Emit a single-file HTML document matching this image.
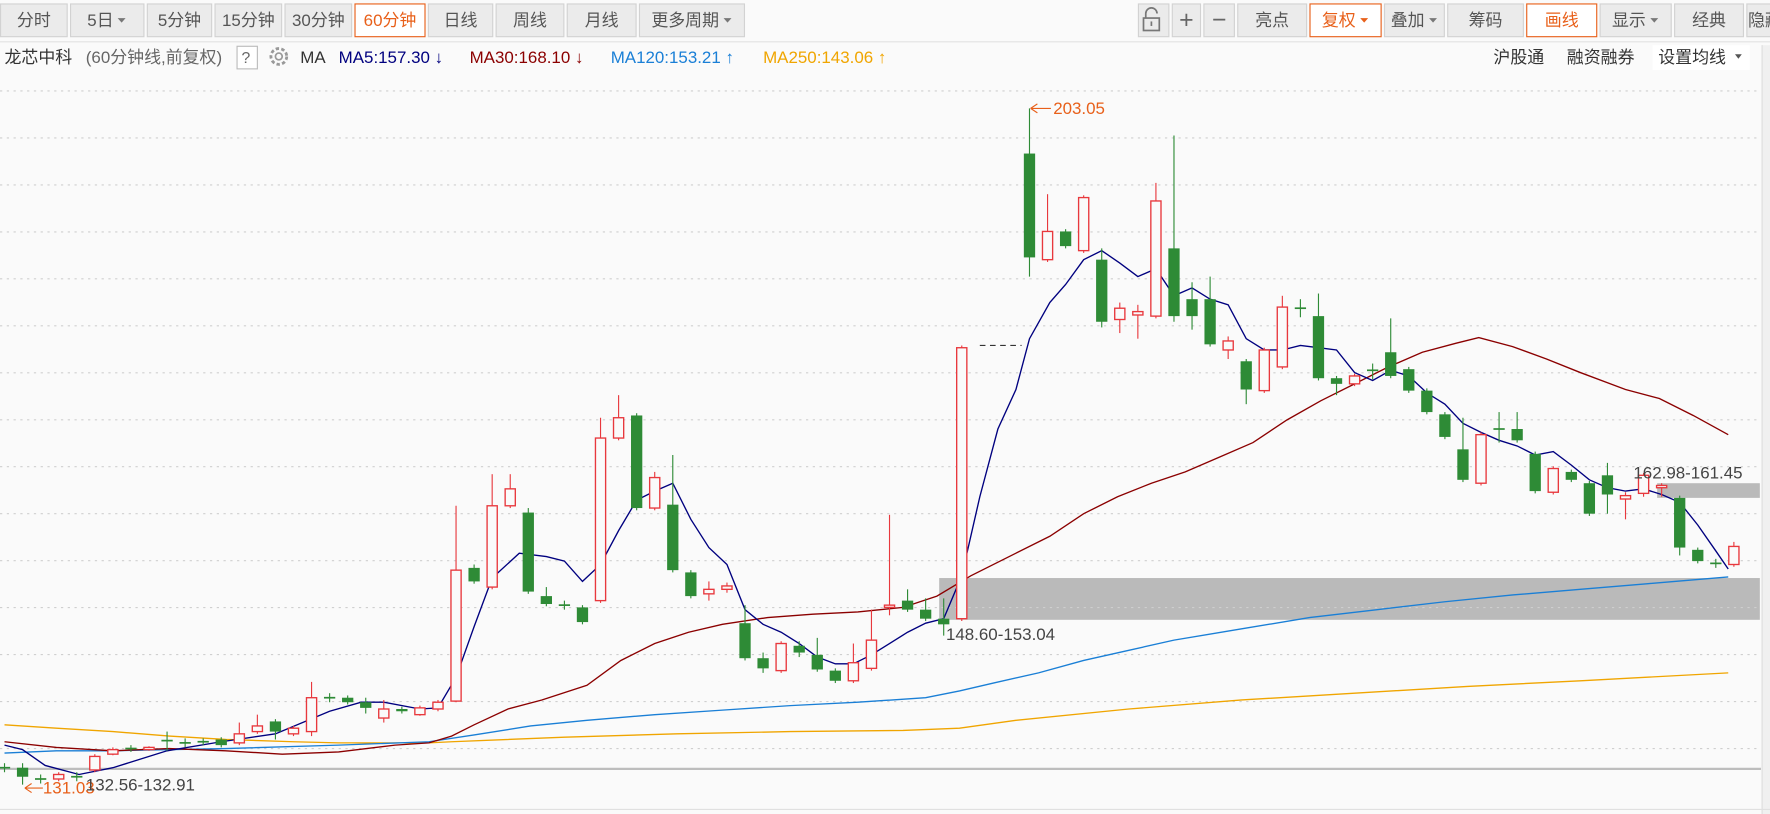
<!DOCTYPE html>
<html><head><meta charset="utf-8">
<style>
html,body{margin:0;padding:0;background:#fafafa;overflow:hidden}
svg{display:block}
text{font-family:"Liberation Sans","Noto Sans CJK SC",sans-serif}
</style></head>
<body>
<svg id="s" width="1770" height="814" viewBox="0 0 1568 721" preserveAspectRatio="none" xmlns="http://www.w3.org/2000/svg">
<rect x="0" y="0" width="1568" height="721" fill="#fafafa"/>
<!-- toolbar -->
<g id="tb" font-size="15" fill="#555"></g>
<line x1="0" y1="37" x2="1568" y2="37" stroke="#e2e2e2"/>
<!-- info line -->
<g font-size="15">
<text x="4" y="56" fill="#333">龙芯中科</text>
<text x="76" y="56" fill="#666">(60分钟线,前复权)</text>
<rect x="210" y="41" width="18" height="20" fill="#fff" stroke="#bbb"/>
<text x="214" y="56" fill="#666" font-size="14">?</text>
<circle cx="247" cy="50" r="7" fill="none" stroke="#999" stroke-width="2.5" stroke-dasharray="3 2"/>
<circle cx="247" cy="50" r="3" fill="none" stroke="#999" stroke-width="1.5"/>
<text x="266" y="56" fill="#333">MA</text>
<text x="300" y="56" fill="#00007f">MA5:157.30 ↓</text>
<text x="416" y="56" fill="#8b0000">MA30:168.10 ↓</text>
<text x="541" y="56" fill="#1a7fd6">MA120:153.21 ↑</text>
<text x="676" y="56" fill="#f0a500">MA250:143.06 ↑</text>
<text x="1323" y="56" fill="#333">沪股通</text>
<text x="1388" y="56" fill="#333">融资融券</text>
<rect x="1464" y="40" width="86" height="22" fill="#fff"/>
<text x="1469" y="56" fill="#333">设置均线</text>
<path d="M1537 48 l6 0 l-3 4z" fill="#555"/>
</g>
<!-- zones -->
<rect x="832" y="512" width="727" height="37" fill="#bababa"/>
<rect x="1468" y="428" width="91" height="13" fill="#bababa"/>
<g id="grid" stroke="#cfcfcf" stroke-dasharray="2 4"></g>
<line x1="0" y1="681" x2="1560" y2="681" stroke="#bdbdbd" stroke-width="2"/>
<rect x="1561" y="40" width="7" height="681" fill="#f0f0f0"/>
<line x1="1561" y1="40" x2="1561" y2="721" stroke="#ddd"/>
<line x1="0" y1="717" x2="1568" y2="717" stroke="#e0e0e0"/>
<g id="ma" fill="none" stroke-width="1.2"></g>
<g id="cd"></g>
<line x1="868" y1="306" x2="905" y2="306" stroke="#333" stroke-dasharray="5 4"/>
<!-- labels -->
<g font-size="15">
<text x="933" y="101" fill="#e8601a">203.05</text>
<path d="M913 96 h18 M913 96 l6 -4 M913 96 l6 4" stroke="#e8601a" fill="none"/>
<text x="838" y="567" fill="#444">148.60-153.04</text>
<text x="1447" y="424" fill="#444">162.98-161.45</text>
<text x="38" y="703" fill="#e8601a">131.03</text>
<path d="M22 698 h16 M22 698 l6 -4 M22 698 l6 4" stroke="#e8601a" fill="none"/>
<text x="76" y="700" fill="#444">132.56-132.91</text>
</g>
</svg>
<script>
var NS="http://www.w3.org/2000/svg";
function el(p,t,a,txt){var e=document.createElementNS(NS,t);for(var k in a)e.setAttribute(k,a[k]);if(txt)e.textContent=txt;p.appendChild(e);return e;}
var tb=document.getElementById('tb');
var btns=[[0,60,'分时'],[62,128,'5日',1],[130,188,'5分钟'],[190,250,'15分钟'],[252,312,'30分钟'],[314,377,'60分钟',0,1],[379,437,'日线'],[439,500,'周线'],[502,564,'月线'],[566,660,'更多周期',1],
[1008,1036,''],[1038,1064,'+'],[1066,1094,'−'],[1096,1158,'亮点'],[1160,1224,'复权',1,1],[1226,1280,'叠加',1],[1282,1350,'筹码'],[1352,1415,'画线',0,1],[1417,1481,'显示',1],[1483,1545,'经典'],[1547,1580,'隐藏']];
btns.forEach(function(b){
 var act=b[4];
 el(tb,'rect',{x:b[0]+.5,y:3.5,width:b[1]-b[0]-1,height:29,fill:act?'#fff':'#ebebeb',stroke:act?'#e8601a':'#d2d2d2'});
 var w=b[1]-b[0];var tw=b[2].length*15*(b[2].match(/^[0-9+−]/)?0.75:1);
 if(b[2]=='+'||b[2]=='−'){el(tb,'text',{x:b[0]+w/2,y:25,'text-anchor':'middle','font-size':22,fill:'#666'},b[2]);return;}
 var cx=b[0]+w/2-(b[3]?6:0);
 el(tb,'text',{x:cx,y:23,'text-anchor':'middle',fill:act?'#e8601a':'#555'},b[2]);
 if(b[3])el(tb,'path',{d:'M'+(cx+tw/2+4)+' 16 l7 0 l-3.5 4z',fill:act?'#e8601a':'#777'});
});
// lock icon
el(tb,'path',{d:'M1015 16 v-4 a5 5 0 0 1 10 0',fill:'none',stroke:'#777','stroke-width':1.5});
el(tb,'rect',{x:1013,y:16,width:14,height:11,fill:'none',stroke:'#777','stroke-width':1.5});
el(tb,'line',{x1:1020,y1:19,x2:1020,y2:23,stroke:'#777','stroke-width':1.5});
var g=document.getElementById('grid');
for(var k=0;k<15;k++){var y=663-41.6*k;el(g,'line',{x1:0,y1:y,x2:1560,y2:y});}
var ma=document.getElementById('ma');
var lines={
'#f0a500':'4,642 50,645 100,648 150,652 200,655 260,657 300,658 380,658 400,657 500,653 600,650 700,648 800,647 850,645 900,638 1000,628 1100,620 1200,614 1300,608 1400,603 1531,596',
'#1a7fd6':'4,667 50,665 100,665 200,663 300,660 380,657 420,651 470,643 520,638 580,633 640,629 700,625 760,622 820,618 850,612 880,605 920,596 960,585 1000,576 1040,567 1100,557 1160,547 1220,540 1280,533 1340,527 1400,522 1460,517 1531,511',
'#8b0000':'4,657 50,662 100,665 150,663 200,665 250,668 300,666 350,660 380,658 400,652 420,642 450,628 480,620 520,607 550,585 580,570 610,560 640,553 680,547 720,544 760,542 800,538 830,528 860,510 900,490 930,475 960,455 990,440 1020,428 1050,418 1080,405 1110,392 1140,372 1170,355 1200,340 1230,325 1260,312 1290,304 1310,299 1340,307 1370,318 1400,330 1440,345 1470,353 1500,368 1531,385',
'#00007f':'4,660 20,664 40,678 70,686 100,680 148,665 196,657 244,650 292,630 320,622 340,622 372,628 388,627 404,600 420,555 436,512 460,490 484,493 500,497 516,515 532,500 548,470 564,443 580,435 596,428 612,460 628,485 644,500 660,540 676,553 692,560 708,570 724,582 740,588 756,588 772,580 788,570 804,560 820,552 836,548 852,510 868,440 884,380 900,345 912,300 930,268 944,252 960,230 976,222 992,233 1008,245 1024,238 1040,262 1056,255 1072,265 1088,270 1104,300 1120,310 1136,310 1152,306 1168,308 1184,310 1200,330 1216,337 1232,328 1248,333 1264,348 1280,358 1296,375 1312,383 1328,390 1344,395 1360,403 1376,400 1392,412 1408,425 1424,432 1440,435 1456,433 1472,438 1488,445 1504,465 1520,488 1531,504'};
for(var c in lines)el(ma,'polyline',{points:lines[c],stroke:c});
// candles: x, type(R/G/+), top, bottom, wickTop, wickBot
var C=[[4,'+',680,680,676,684],[20,'G',680,688,676,695],[36,'+',690,690,686,694],[52,'R',686,690,684,692],[68,'+',688,688,684,692],[84,'R',670,682,668,684],[100,'R',664,668,662,669],[116,'+',663,663,660,666],[132,'R',662,664,661,665],[148,'+',656,656,648,665],[164,'+',658,658,654,662],[180,'+',657,657,654,660],[196,'G',655,660,653,662],[212,'R',650,658,640,660],[228,'R',643,648,633,650],[244,'G',639,648,637,655],[260,'R',645,650,643,652],[276,'R',618,648,604,652],[292,'+',618,618,614,622],[308,'G',618,622,616,624],[324,'G',622,627,618,632],[340,'R',628,636,620,640],[356,'G',628,630,626,632],[372,'R',627,633,625,634],[388,'R',622,628,620,630],[404,'R',505,621,448,622],[420,'G',503,515,500,517],[436,'R',448,520,420,522],[452,'R',433,448,420,450],[468,'G',454,524,450,526],[484,'G',528,535,520,537],[500,'+',536,536,532,540],[516,'G',538,551,536,553],[532,'R',388,532,370,534],[548,'R',370,388,350,390],[564,'G',368,450,366,452],[580,'R',423,450,418,452],[596,'G',447,505,403,507],[612,'G',507,528,505,530],[628,'R',522,526,515,532],[644,'R',519,522,516,525],[660,'G',552,583,536,585],[676,'G',583,592,578,596],[692,'R',570,594,568,596],[708,'G',572,578,568,582],[724,'G',580,593,565,595],[740,'G',594,603,592,605],[756,'R',587,603,570,605],[772,'R',567,592,540,594],[788,'R',536,538,456,545],[804,'G',532,540,522,542],[820,'G',540,548,530,550],[836,'G',548,553,530,563],[852,'R',308,548,306,550],[912,'G',136,228,96,245],[928,'R',205,230,172,232],[944,'G',205,218,203,220],[960,'R',175,222,173,224],[976,'G',230,285,220,290],[992,'R',273,283,268,295],[1008,'R',276,279,270,300],[1024,'R',178,280,162,282],[1040,'G',220,280,120,285],[1056,'G',265,280,250,292],[1072,'G',265,305,245,307],[1088,'R',302,310,298,318],[1104,'G',320,345,318,358],[1120,'R',310,346,308,348],[1136,'R',272,325,262,327],[1152,'+',273,273,265,281],[1168,'G',280,335,260,337],[1184,'G',335,340,333,350],[1200,'R',333,340,331,342],[1216,'+',328,328,322,336],[1232,'G',312,333,282,335],[1248,'G',327,346,325,348],[1264,'G',346,365,344,367],[1280,'G',367,387,365,389],[1296,'G',398,425,370,427],[1312,'R',385,428,383,430],[1328,'+',380,380,365,392],[1344,'G',380,390,365,392],[1360,'G',402,435,400,437],[1376,'R',415,436,413,438],[1392,'G',418,425,416,427],[1408,'G',428,455,426,457],[1424,'G',421,438,410,455],[1440,'R',439,442,436,460],[1456,'R',421,437,419,440],[1472,'R',430,432,428,440],[1488,'G',441,485,439,492],[1504,'G',487,497,485,499],[1520,'+',499,499,495,503],[1536,'R',484,500,480,502]];
var cd=document.getElementById('cd');
C.forEach(function(k){
 var x=k[0],col=k[1]=='R'?'#e8383d':'#2e8b36';
 el(cd,'line',{x1:x,y1:k[4],x2:x,y2:k[5],stroke:col,'stroke-width':1});
 if(k[1]=='+'){col='#2e8b36';cd.lastChild.setAttribute('stroke',col);el(cd,'line',{x1:x-5,y1:k[2],x2:x+5,y2:k[2],stroke:col,'stroke-width':1.5});}
 else if(k[1]=='R')el(cd,'rect',{x:x-4.5,y:k[2],width:9,height:Math.max(1,k[3]-k[2]),fill:'#fafafa',stroke:col,'stroke-width':1.2});
 else el(cd,'rect',{x:x-5,y:k[2],width:10,height:Math.max(2,k[3]-k[2]),fill:col});
});
</script>
</body></html>
